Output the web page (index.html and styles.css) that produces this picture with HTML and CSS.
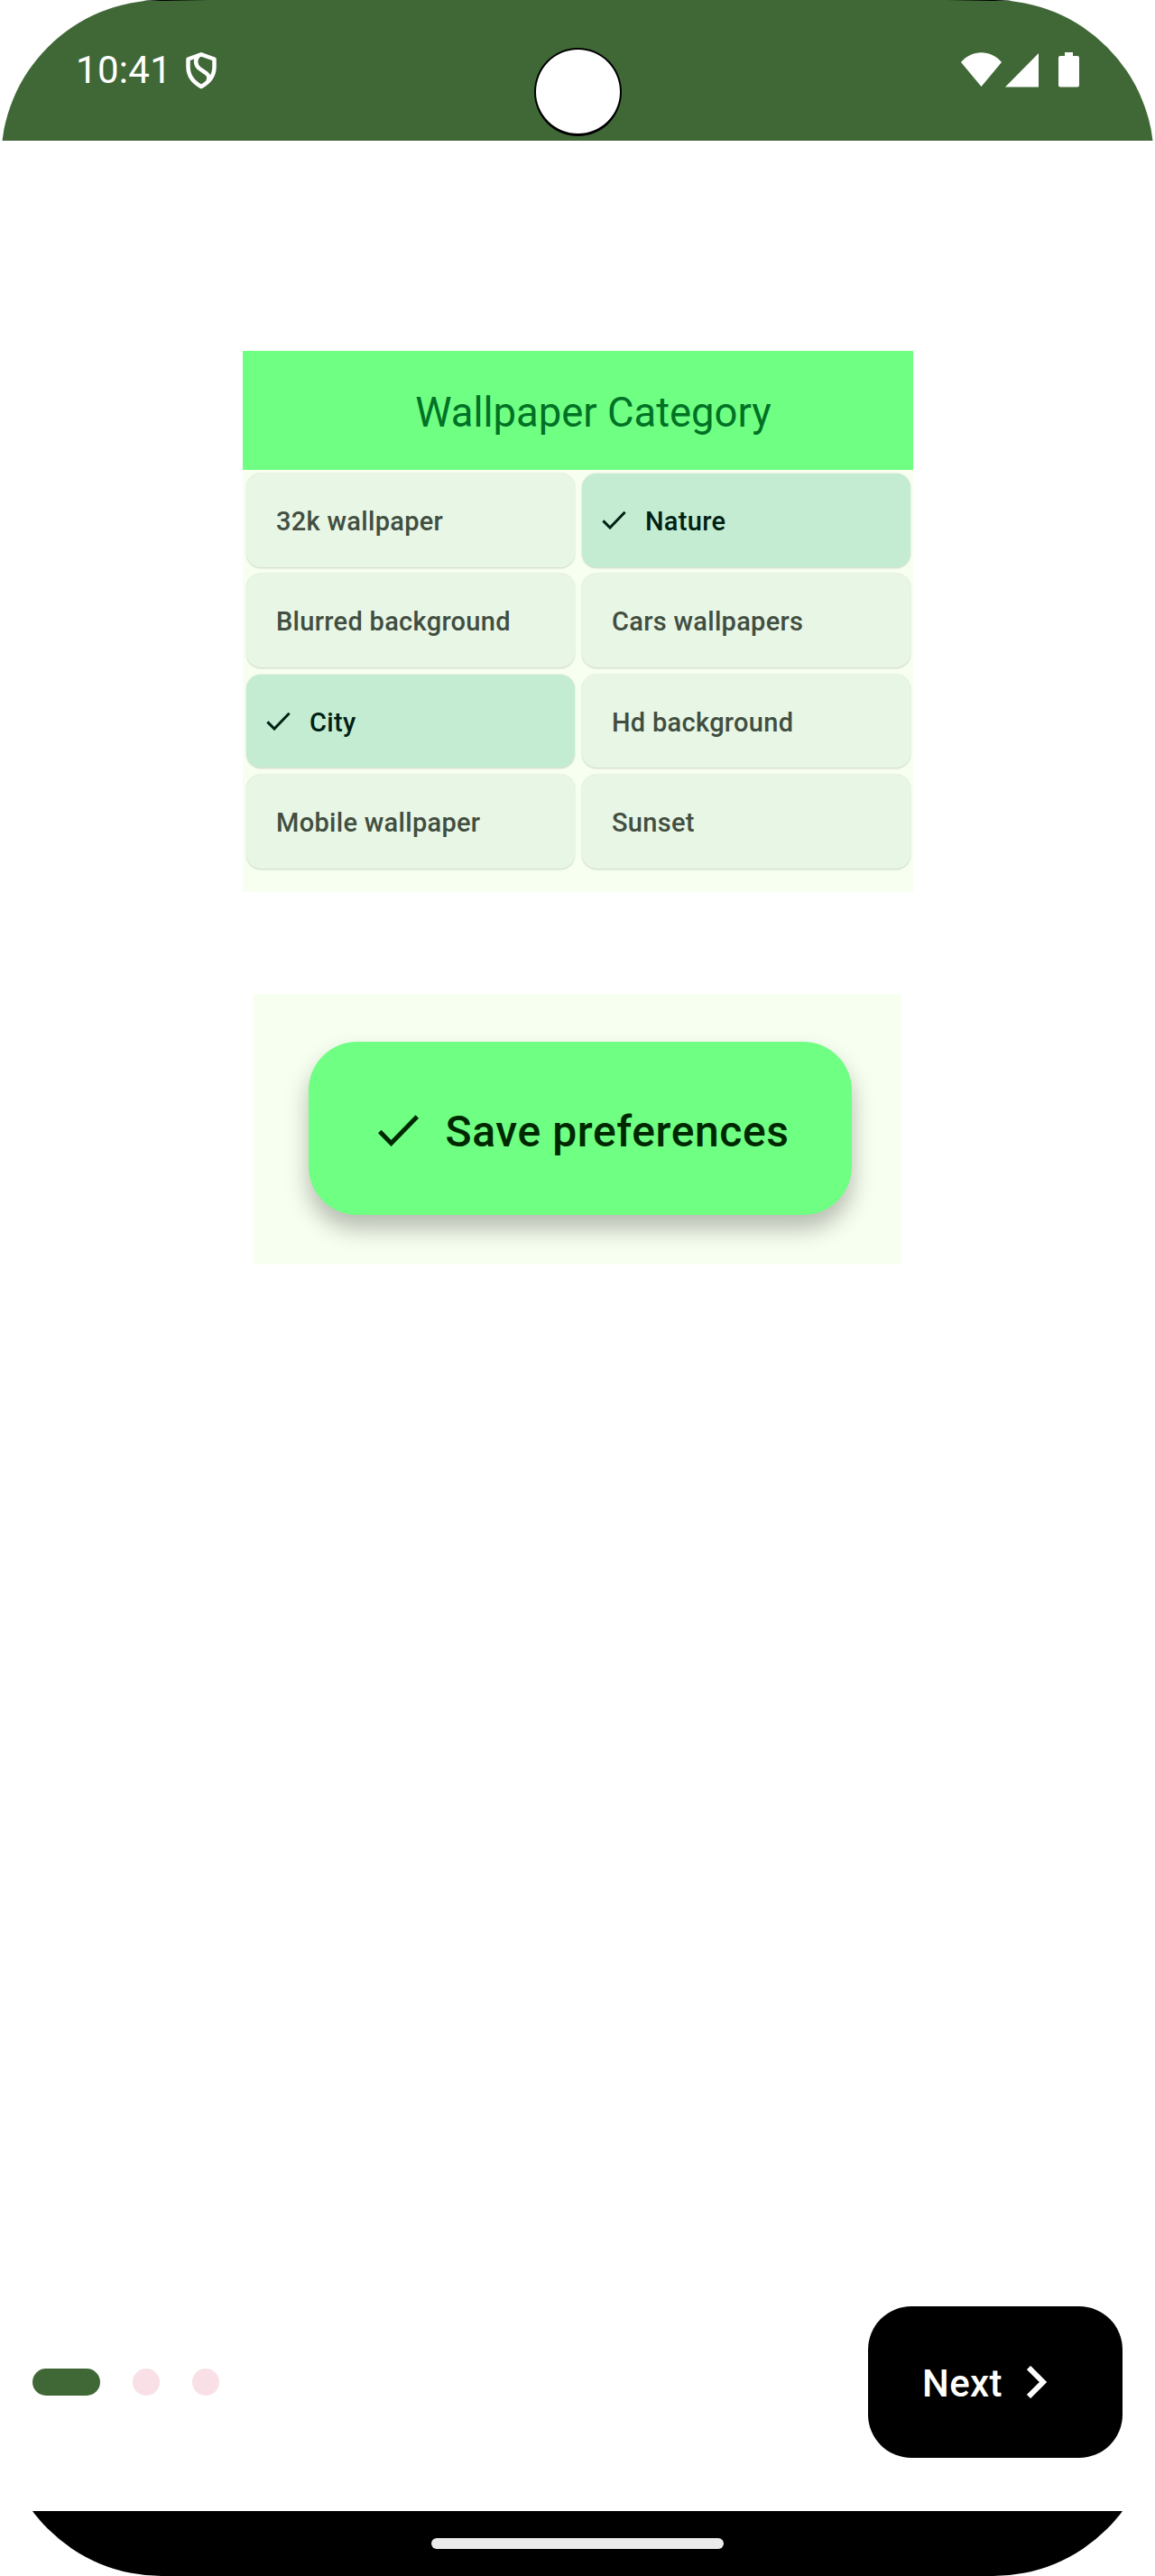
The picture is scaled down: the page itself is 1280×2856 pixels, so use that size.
FILE: index.html
```
<!DOCTYPE html>
<html lang="en">
<head>
<meta charset="utf-8">
<title>Wallpaper Category</title>
<link rel="stylesheet" href="styles.css">
</head>
<body>
<div class="device">
  <header class="status-bar">
    <div class="status-left">
      <span class="clock">10:41</span>
      <svg class="shield" width="34" height="41" viewBox="0 0 34 41" fill="none" stroke="#fff" stroke-width="4.500" stroke-linejoin="round">
        <path d="M17 2.300L2.500 7.500V16C2.500 26 8 33 17 38C26 33 31.500 26 31.500 16V7.500Z"/>
        <path d="M14 3.500C10 8 10 14 15 18C22 23 28 25 24.500 32"/>
      </svg>
    </div>
    <div class="status-right">
      <svg width="146" height="40" viewBox="0 0 146 40" fill="#fff">
        <path d="M0 11C12-3.200 33-3.200 45 11L22.500 38Z"/>
        <path d="M86 1V38.500H49Z"/>
        <path d="M115 0H124V4H129Q131 4 131 6V36.500Q131 38.500 129 38.500H110Q108 38.500 108 36.500V6Q108 4 110 4H115Z"/>
      </svg>
    </div>
    <span class="camera"></span>
  </header>
  <main class="content">
    <section class="categories">
      <h1 class="title">Wallpaper Category</h1>
      <div class="grid">
        <div class="chip"><span>32k wallpaper</span></div>
        <div class="chip selected"><svg class="check" width="27" height="21" viewBox="0 0 27 21"><path d="M1.400 11.400L9 19L25.600 1.800"/></svg><span>Nature</span></div>
        <div class="chip"><span>Blurred background</span></div>
        <div class="chip"><span>Cars wallpapers</span></div>
        <div class="chip selected"><svg class="check" width="27" height="21" viewBox="0 0 27 21"><path d="M1.400 11.400L9 19L25.600 1.800"/></svg><span>City</span></div>
        <div class="chip"><span>Hd background</span></div>
        <div class="chip"><span>Mobile wallpaper</span></div>
        <div class="chip"><span>Sunset</span></div>
      </div>
    </section>
    <section class="save-panel">
      <div class="save">
        <svg class="save-check" width="46" height="35" viewBox="0 0 46 35"><path d="M1.800 18.500L14.500 31.500L43.300 2"/></svg>
        <span>Save preferences</span>
      </div>
    </section>
  </main>
  <footer class="pager">
    <div class="dots"><span class="dot active"></span><span class="dot"></span><span class="dot"></span></div>
    <div class="next"><span>Next</span><svg class="chevron" width="22" height="36" viewBox="0 0 22 36"><path d="M2 2L18 18L2 34"/></svg></div>
  </footer>
  <div class="nav-bar"><span class="handle"></span></div>
</div>
</body>
</html>
```
FILE: styles.css
```
* { box-sizing: border-box; }
body { margin: 0; background: #fff; font-family: Roboto, sans-serif; }
.device {
  width: 1278px; height: 2856px; margin: 0 auto;
  display: flex; flex-direction: column;
  border-radius: 178px; overflow: hidden; background: #fff;
}
.status-bar {
  position: relative; flex: none; height: 156px; padding: 58px 68px 0 83px;
  display: flex; justify-content: space-between; align-items: flex-start;
  background: linear-gradient(90deg, #000 180px, #406836 230px, #406836 1048px, #000 1098px) top / 100% 1px no-repeat #406836;
  color: #fff;
}
.status-left { display: flex; gap: 16px; }
.clock { font-size: 42px; line-height: 40px; letter-spacing: .3px; }
.status-right { display: flex; }
.camera {
  position: absolute; left: 590.5px; top: 53px; width: 97px; height: 98px;
  border: 2px solid #000; border-bottom-width: 3px; border-radius: 50%; background: #fff;
}
.content { flex: 1; display: flex; flex-direction: column; align-items: center; padding-top: 233px; }
.categories { width: 743px; height: 600px; background: #f7fff0; }
.title {
  margin: 0; height: 132px; padding: 6px 0 0 35px;
  display: flex; align-items: center; justify-content: center;
  background: #6fff83; color: #007225;
  font-size: 45.4px; font-weight: 400; line-height: 54px;
}
.grid { display: grid; grid-template-columns: 364px 364px; gap: 7.9px 8px; padding: 4px 4px 0; }
.chip {
  height: 103.5px; padding-left: 33.5px; border-radius: 16px;
  display: flex; align-items: center;
  background: #e8f6e5; color: #414e41;
  font-size: 29px; font-weight: 500; letter-spacing: .3px;
  box-shadow: 0 .5px 2px rgba(0, 0, 0, .18);
}
.chip span { padding-top: 2px; }
.chip.selected { padding-left: 22px; gap: 21.5px; background: #c4ecd2; color: #002114; }
.check, .save-check, .chevron { flex: none; fill: none; stroke: currentColor; stroke-width: 3; }
.save-panel {
  width: 718px; height: 300px; margin-top: 113px; padding: 53px 55px 0 61px; background: #f7fff0;
  overflow: hidden;
}
.save {
  height: 192px; padding: 4px 0 0 77px; border-radius: 54px;
  display: flex; align-items: center; gap: 28.5px;
  background: #6fff83; color: #002800; font-size: 48px; font-weight: 500; letter-spacing: .6px;
  box-shadow: 0 15px 26px rgba(0, 0, 0, .27);
}
.save span { padding-top: 2px; }
.save-check { stroke-width: 5; }
.pager {
  flex: none; height: 227px; padding: 0 35px;
  display: flex; justify-content: space-between; align-items: flex-start;
}
.dots { display: flex; gap: 36px; margin-top: 69px; }
.dot { width: 30px; height: 30px; border-radius: 15px; background: #f8e0e6; }
.dot.active { width: 75px; background: #406836; }
.next {
  width: 282px; height: 168px; border-radius: 48px; padding-left: 60px;
  display: flex; align-items: center; gap: 27px;
  background: #000; color: #fff; font-size: 42px; font-weight: 500; letter-spacing: .4px;
}
.next span { padding-top: 3px; }
.chevron { stroke-width: 6; }
.nav-bar { flex: none; height: 72px; background: #000; display: flex; justify-content: center; align-items: center; }
.handle { width: 324px; height: 12px; border-radius: 6px; background: #ebebeb; }
```
